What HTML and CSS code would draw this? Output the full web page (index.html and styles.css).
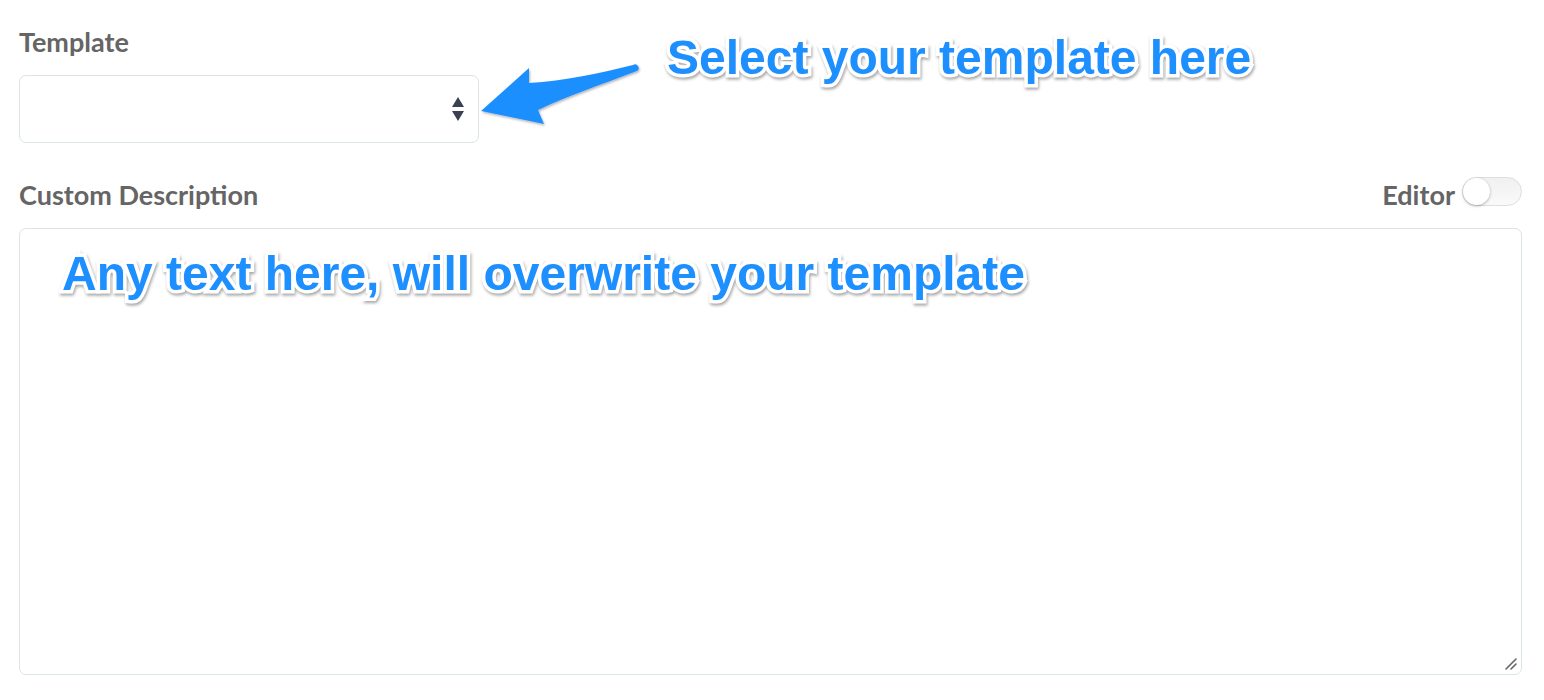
FILE: index.html
```html
<!DOCTYPE html>
<html>
<head>
<meta charset="utf-8">
<link rel="stylesheet" href="styles.css">
</head>
<body>
<div class="form">
  <div class="group">
    <label class="label">Template</label>
    <div class="select">
      <svg class="select-arrows" width="14" height="26" viewBox="0 0 14 26">
        <path d="M7 1 L13 11 L1 11 Z" fill="#3b4152"/>
        <path d="M1 15 L13 15 L7 25 Z" fill="#3b4152"/>
      </svg>
    </div>
  </div>
  <div class="group group-desc">
    <div class="row">
      <label class="label">Custom Description</label>
      <div class="editor">
        <span class="label">Editor</span>
        <span class="toggle"><span class="knob"></span></span>
      </div>
    </div>
    <div class="textarea">
      <svg class="resize" width="14" height="14" viewBox="0 0 14 14">
        <path d="M2 12 L12 2 M7 12 L12 7" stroke="#666" stroke-width="1.6" stroke-linecap="round"/>
      </svg>
    </div>
  </div>

  <div class="note note-select">Select your template here</div>
  <svg class="pointer" width="180" height="80" viewBox="0 0 180 80">
    <defs>
      <filter id="sh" x="-10%" y="-10%" width="130%" height="140%">
        <feDropShadow dx="1" dy="1.5" stdDeviation="1.2" flood-color="#000" flood-opacity="0.3"/>
      </filter>
    </defs>
    <path filter="url(#sh)" fill="#1e8fff" d="M11 56 L59 13 L59 28 C95 26 130 18 163 10 A3.3 3.3 0 0 1 167 16 C130 30 100 40 68 55 L74 69 Z"/>
  </svg>
  <div class="note note-text">Any text here, will overwrite your template</div>
</div>
</body>
</html>
```
FILE: styles.css
```css
html, body {
  margin: 0;
  padding: 0;
  background: #fff;
}
body {
  font-family: "Lato", "Open Sans", sans-serif;
}
.form {
  position: relative;
  display: flex;
  flex-direction: column;
  padding: 25px 22px 0 19px;
  height: 700px;
  box-sizing: border-box;
}
.group {
  display: flex;
  flex-direction: column;
}
.label {
  font-size: 27px;
  line-height: 33px;
  font-weight: 700;
  color: #656565;
}
.select {
  margin-top: 17px;
  width: 460px;
  height: 68px;
  box-sizing: border-box;
  border: 1px solid #dbe4e6;
  border-radius: 7px;
  display: flex;
  align-items: center;
  justify-content: flex-end;
  padding-right: 13px;
}
.select-arrows {
  display: block;
}
.group-desc {
  margin-top: 33px;
}
.row {
  display: flex;
  justify-content: space-between;
  align-items: baseline;
}
.editor {
  display: flex;
  align-items: baseline;
  gap: 7px;
}
.toggle {
  display: inline-block;
  position: relative;
  width: 60px;
  height: 29px;
  box-sizing: border-box;
  border: 1px solid #dedede;
  border-radius: 15px;
  background: linear-gradient(#f0f0f0, #fafafa);
  top: 1px;
}
.knob {
  position: absolute;
  left: 0;
  top: 0;
  width: 27px;
  height: 27px;
  border-radius: 50%;
  background: #fff;
  box-shadow: 0 1px 3px rgba(0,0,0,0.3);
}
.textarea {
  position: relative;
  margin-top: 17px;
  height: 447px;
  box-sizing: border-box;
  border: 1px solid #dbe4e6;
  border-radius: 7px;
}
.resize {
  position: absolute;
  right: 3px;
  bottom: 3px;
}
.note {
  position: absolute;
  font-family: "Liberation Sans", Arial, sans-serif;
  font-weight: 700;
  font-size: 48px;
  line-height: 48px;
  color: #1e8fff;
  white-space: nowrap;
  -webkit-text-stroke: 7px #fff;
  paint-order: stroke fill;
  filter: drop-shadow(1px 2px 1.5px rgba(0,0,0,0.35));
}
.note-select {
  left: 667px;
  top: 34px;
}
.note-text {
  left: 62px;
  top: 250px;
}
.pointer {
  position: absolute;
  left: 470px;
  top: 55px;
}
```
